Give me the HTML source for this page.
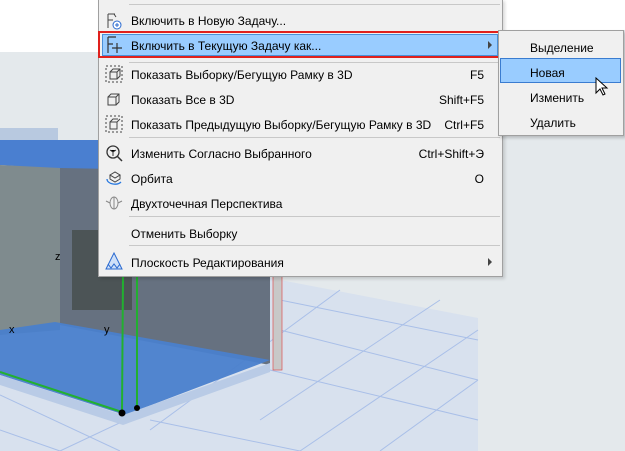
<!DOCTYPE html>
<html><head><meta charset="utf-8"><style>
body{margin:0;width:625px;height:451px;position:relative;overflow:hidden;background:#e4e9ec;font-family:"Liberation Sans",sans-serif;font-size:12px;color:#000}
.a{position:absolute}
.menu{left:98px;top:-1px;width:403px;height:277px;background:#f0f0f0;border:1px solid #a0a0a0;border-top:none;box-shadow:2px 2px 3px rgba(0,0,0,.15)}
.it{position:absolute;left:32px;white-space:nowrap;line-height:14px}
.sc{position:absolute;right:18px;white-space:nowrap;line-height:14px}
.sep{position:absolute;left:30px;right:2px;height:1px;background:#c8c8c8}
.ic{position:absolute;left:6px}
.sub{left:498px;top:30px;width:124px;height:104px;background:#f0f0f0;border:1px solid #a0a0a0;box-shadow:2px 2px 3px rgba(0,0,0,.2)}
.si{position:absolute;left:31px;line-height:14px}
</style></head><body>
<div class="a" style="left:0;top:0;width:625px;height:30px;background:#fff"></div>
<div class="a" style="left:0;top:0;width:100px;height:52px;background:#fff"></div>
<svg class="a" style="left:0;top:0" width="625" height="451">
<polygon points="0,300 270,278 478,318 478,451 0,451" fill="#d8e1ee"/>
<g stroke="#a9bfe8" stroke-width="1">
<line x1="280" y1="300" x2="478" y2="340"/><line x1="280" y1="330" x2="478" y2="380"/><line x1="270" y1="370" x2="478" y2="420"/><line x1="150" y1="420" x2="300" y2="451"/>
<line x1="478" y1="330" x2="300" y2="451"/><line x1="478" y1="380" x2="380" y2="451"/><line x1="440" y1="300" x2="260" y2="420"/><line x1="340" y1="290" x2="150" y2="430"/>
<line x1="0" y1="395" x2="120" y2="451"/><line x1="0" y1="430" x2="60" y2="451"/><line x1="60" y1="451" x2="130" y2="418"/>
</g>
<polygon points="0,128 58,128 58,140 0,140" fill="#b8c9e0"/>
<polygon points="0,140 100,140 100,172 0,165" fill="#4a7fd0"/>
<polygon points="0,165 60,168 60,330 0,335" fill="#7f8b8e"/>
<polygon points="60,168 270,172 270,365 60,325" fill="#667180"/>
<rect x="72" y="230" width="60" height="80" fill="#4c5456"/>
<polygon points="0,330 55,322 270,360 125,415 0,375" fill="#4a80cc" opacity=".95"/>
<polygon points="0,375 123,415 270,363 270,372 123,425 0,385" fill="#b9cbe6"/>
<rect x="273" y="276" width="9" height="94" fill="#c8c8c8" stroke="#e05050" stroke-width=".7"/>
<g stroke="#22b030" stroke-width="2"><line x1="123" y1="276" x2="122" y2="412"/><line x1="137" y1="276" x2="137" y2="408"/><line x1="0" y1="372" x2="122" y2="412"/></g>
<circle cx="122" cy="413" r="3.5"/><circle cx="137" cy="408" r="3"/>
<text x="55" y="260" font-size="11" font-family="Liberation Sans">z</text>
<text x="9" y="333" font-size="11" font-family="Liberation Sans">x</text>
<text x="104" y="333" font-size="11" font-family="Liberation Sans">y</text>
</svg>

<div class="a menu">
<div class="sep" style="top:5px"></div>
<svg class="ic" style="top:13px" width="18" height="18"><path d="M3 2v14M3 2h7M3 8h5M9 2l2 3" stroke="#444" fill="none"/><circle cx="12" cy="13" r="4" fill="#fff" stroke="#2a6ad0"/><path d="M12 11v4M10 13h4" stroke="#2a6ad0"/></svg>
<div class="it" style="top:15px">Включить в Новую Задачу...</div>
<div class="a" style="left:-1px;top:32px;width:403px;height:27px;border:2px solid #e0201c;box-sizing:border-box"></div>
<div class="a" style="left:3px;top:35px;width:396px;height:22px;background:#99ccff;border:1px solid #4a90d8;box-sizing:border-box"></div>
<svg class="ic" style="top:37px" width="18" height="18"><path d="M3 1v16M3 1h8M3 8h5M7 12h10M12 7v10" stroke="#333" fill="none" stroke-width="1.2"/></svg>
<div class="it" style="top:40px">Включить в Текущую Задачу как...</div>
<div class="a" style="left:389px;top:42px;width:0;height:0;border-left:4px solid #444;border-top:4px solid transparent;border-bottom:4px solid transparent"></div>
<div class="sep" style="top:63px"></div>
<svg class="ic" style="top:66px" width="18" height="18"><rect x="1" y="1" width="16" height="16" fill="none" stroke="#444" stroke-dasharray="2,2"/><path d="M5 7h7v7H5zM5 7l3-3h7v7l-3 3M12 7l3-3" fill="none" stroke="#444"/></svg>
<div class="it" style="top:69px">Показать Выборку/Бегущую Рамку в 3D</div><div class="sc" style="top:69px">F5</div>
<svg class="ic" style="top:91px" width="18" height="18"><path d="M3 7h8v8H3zM3 7l3-3h8v8l-3 3M11 7l3-3" fill="none" stroke="#444"/></svg>
<div class="it" style="top:94px">Показать Все в 3D</div><div class="sc" style="top:94px">Shift+F5</div>
<svg class="ic" style="top:116px" width="18" height="18"><rect x="1" y="1" width="16" height="16" fill="none" stroke="#444" stroke-dasharray="2,2"/><path d="M5 7h7v7H5zM5 7l3-3h5M12 7l3-3" fill="none" stroke="#444"/></svg>
<div class="it" style="top:119px">Показать Предыдущую Выборку/Бегущую Рамку в 3D</div><div class="sc" style="top:119px">Ctrl+F5</div>
<div class="sep" style="top:138px"></div>
<svg class="ic" style="top:145px" width="18" height="18"><circle cx="8" cy="8" r="6" fill="none" stroke="#333" stroke-width="1.3"/><path d="M12 12l5 5" stroke="#333" stroke-width="1.5"/><path d="M5 6l3 2 3-2M8 8v4" stroke="#333"/></svg>
<div class="it" style="top:148px">Изменить Согласно Выбранного</div><div class="sc" style="top:148px">Ctrl+Shift+Э</div>
<svg class="ic" style="top:170px" width="18" height="18"><path d="M5 6l5-3 5 3-5 3z M5 6v4l5 3 5-3V6" fill="none" stroke="#444"/><path d="M2 10c0 5 10 7 14 3" fill="none" stroke="#2a7ae0" stroke-width="1.3"/></svg>
<div class="it" style="top:173px">Орбита</div><div class="sc" style="top:173px">O</div>
<svg class="ic" style="top:195px" width="18" height="18"><ellipse cx="9" cy="9" rx="4" ry="6" fill="none" stroke="#888"/><path d="M9 3v12M1 7l4 2M17 7l-4 2" stroke="#888"/></svg>
<div class="it" style="top:198px">Двухточечная Перспектива</div>
<div class="sep" style="top:217px"></div>
<div class="it" style="top:228px">Отменить Выборку</div>
<div class="sep" style="top:246px"></div>
<svg class="ic" style="top:253px" width="18" height="18"><path d="M9 1l8 16H1z" fill="#cfe0f8" stroke="#2a6ad0"/><path d="M3 12l3 4 3-4 3 4 3-4" fill="none" stroke="#2a6ad0"/></svg>
<div class="it" style="top:257px">Плоскость Редактирования</div>
<div class="a" style="left:389px;top:259px;width:0;height:0;border-left:4px solid #444;border-top:4px solid transparent;border-bottom:4px solid transparent"></div>
</div>

<div class="a sub">
<div class="si" style="top:10px">Выделение</div>
<div class="a" style="left:1px;top:27px;width:121px;height:25px;background:#99ccff;border:1px solid #3a7cd0;box-sizing:border-box"></div>
<div class="si" style="top:35px">Новая</div>
<div class="si" style="top:60px">Изменить</div>
<div class="si" style="top:85px">Удалить</div>
</div>
<svg class="a" style="left:595px;top:77px" width="14" height="20"><path d="M1 1v15l4-4 3 6 2-1-3-6h5z" fill="#fff" stroke="#000"/></svg>
</body></html>
